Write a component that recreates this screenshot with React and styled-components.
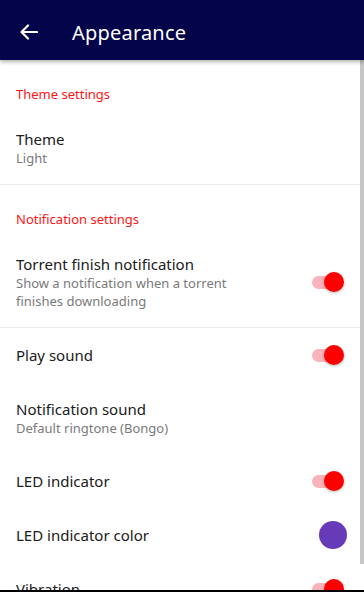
import React from 'react';
import styled, { createGlobalStyle } from 'styled-components';

const GlobalStyle = createGlobalStyle`
    html, body {
        margin: 0;
        padding: 0;
        background: #ffffff;
    }
    body {
        font-family: "Noto Sans", "Open Sans", sans-serif;
    }
`

const Screen = styled.div`
    position: relative;
    width: 364px;
    height: 592px;
    display: flex;
    flex-direction: column;
    overflow: hidden;
    background-color: #ffffff;
`

const Toolbar = styled.div`
    height: 60px;
    flex-shrink: 0;
    display: flex;
    align-items: center;
    padding: 4px 0 0 18px;
    box-sizing: border-box;
    background-color: #04044a;
    box-shadow: 0 2px 4px rgba(0, 0, 0, 0.3);
    z-index: 2;
`

const BackButton = styled.div`
    width: 22px;
    height: 22px;
    display: flex;
    align-items: center;
    justify-content: center;
`

const Title = styled.div`
    margin-left: 32px;
    font-size: 20px;
    color: #ffffff;
    letter-spacing: 0.2px;
`

const List = styled.div`
    flex: 1;
    overflow: hidden;
    display: flex;
    flex-direction: column;
`

const SectionHeader = styled.div`
    padding: 26px 16px 10px;
    font-size: 13px;
    line-height: 16px;
    color: #ff1414;
`

const Item = styled.div`
    display: flex;
    align-items: center;
    flex-shrink: 0;
    padding: ${props => props.single ? '0 20px 0 16px' : '17px 20px 17px 16px'};
    height: ${props => props.single ? '54px' : 'auto'};
    box-sizing: border-box;
`

const ItemText = styled.div`
    flex: 1;
    min-width: 0;
`

const ItemTitle = styled.div`
    font-size: 15px;
    line-height: 20px;
    color: #202020;
`

const ItemSummary = styled.div`
    font-size: 13px;
    line-height: 18px;
    color: #7a7a7a;
    max-width: 240px;
`

const Divider = styled.div`
    height: 1px;
    flex-shrink: 0;
    background-color: #ebebeb;
`

const Switch = styled.div`
    position: relative;
    width: 32px;
    height: 20px;
    display: flex;
    align-items: center;
    flex-shrink: 0;
`

const Track = styled.div`
    width: 28px;
    height: 13px;
    border-radius: 7px;
    background-color: #f9b3ba;
`

const Thumb = styled.div`
    position: absolute;
    right: 0;
    top: 0;
    width: 20px;
    height: 20px;
    border-radius: 50%;
    background-color: #ff0000;
    box-shadow: 0 1px 3px rgba(0, 0, 0, 0.3);
`

const ColorDot = styled.div`
    width: 28px;
    height: 28px;
    margin-right: -3px;
    border-radius: 50%;
    background-color: ${props => props.color};
    flex-shrink: 0;
`

const Scrollbar = styled.div`
    position: absolute;
    right: 0;
    top: 60px;
    width: 4px;
    height: 504px;
    background-color: #c6c6c6;
`

const NavBar = styled.div`
    height: 2px;
    flex-shrink: 0;
    background-color: #000000;
`

const Toggle = () => (
    <Switch>
        <Track />
        <Thumb />
    </Switch>
)

const ArrowIcon = () => (
    <svg width="18" height="16" viewBox="0 0 18 16" fill="none">
        <path d="M17 8H2M8 1.5L1.5 8L8 14.5" stroke="#ffffff" strokeWidth="2.2" strokeLinecap="round" strokeLinejoin="round" />
    </svg>
)

class App extends React.Component {
    render() {
        return (
            <Screen>
                <GlobalStyle />
                <Toolbar>
                    <BackButton>
                        <ArrowIcon />
                    </BackButton>
                    <Title>Appearance</Title>
                </Toolbar>
                <List>
                    <SectionHeader>Theme settings</SectionHeader>
                    <Item>
                        <ItemText>
                            <ItemTitle>Theme</ItemTitle>
                            <ItemSummary>Light</ItemSummary>
                        </ItemText>
                    </Item>
                    <Divider />
                    <SectionHeader>Notification settings</SectionHeader>
                    <Item>
                        <ItemText>
                            <ItemTitle>Torrent finish notification</ItemTitle>
                            <ItemSummary>Show a notification when a torrent finishes downloading</ItemSummary>
                        </ItemText>
                        <Toggle />
                    </Item>
                    <Divider />
                    <Item single>
                        <ItemText>
                            <ItemTitle>Play sound</ItemTitle>
                        </ItemText>
                        <Toggle />
                    </Item>
                    <Item>
                        <ItemText>
                            <ItemTitle>Notification sound</ItemTitle>
                            <ItemSummary>Default ringtone (Bongo)</ItemSummary>
                        </ItemText>
                    </Item>
                    <Item single>
                        <ItemText>
                            <ItemTitle>LED indicator</ItemTitle>
                        </ItemText>
                        <Toggle />
                    </Item>
                    <Item single>
                        <ItemText>
                            <ItemTitle>LED indicator color</ItemTitle>
                        </ItemText>
                        <ColorDot color="#673ab7" />
                    </Item>
                    <Item single>
                        <ItemText>
                            <ItemTitle>Vibration</ItemTitle>
                        </ItemText>
                        <Toggle />
                    </Item>
                </List>
                <NavBar />
                <Scrollbar />
            </Screen>
        );
    }
}

export default App;
